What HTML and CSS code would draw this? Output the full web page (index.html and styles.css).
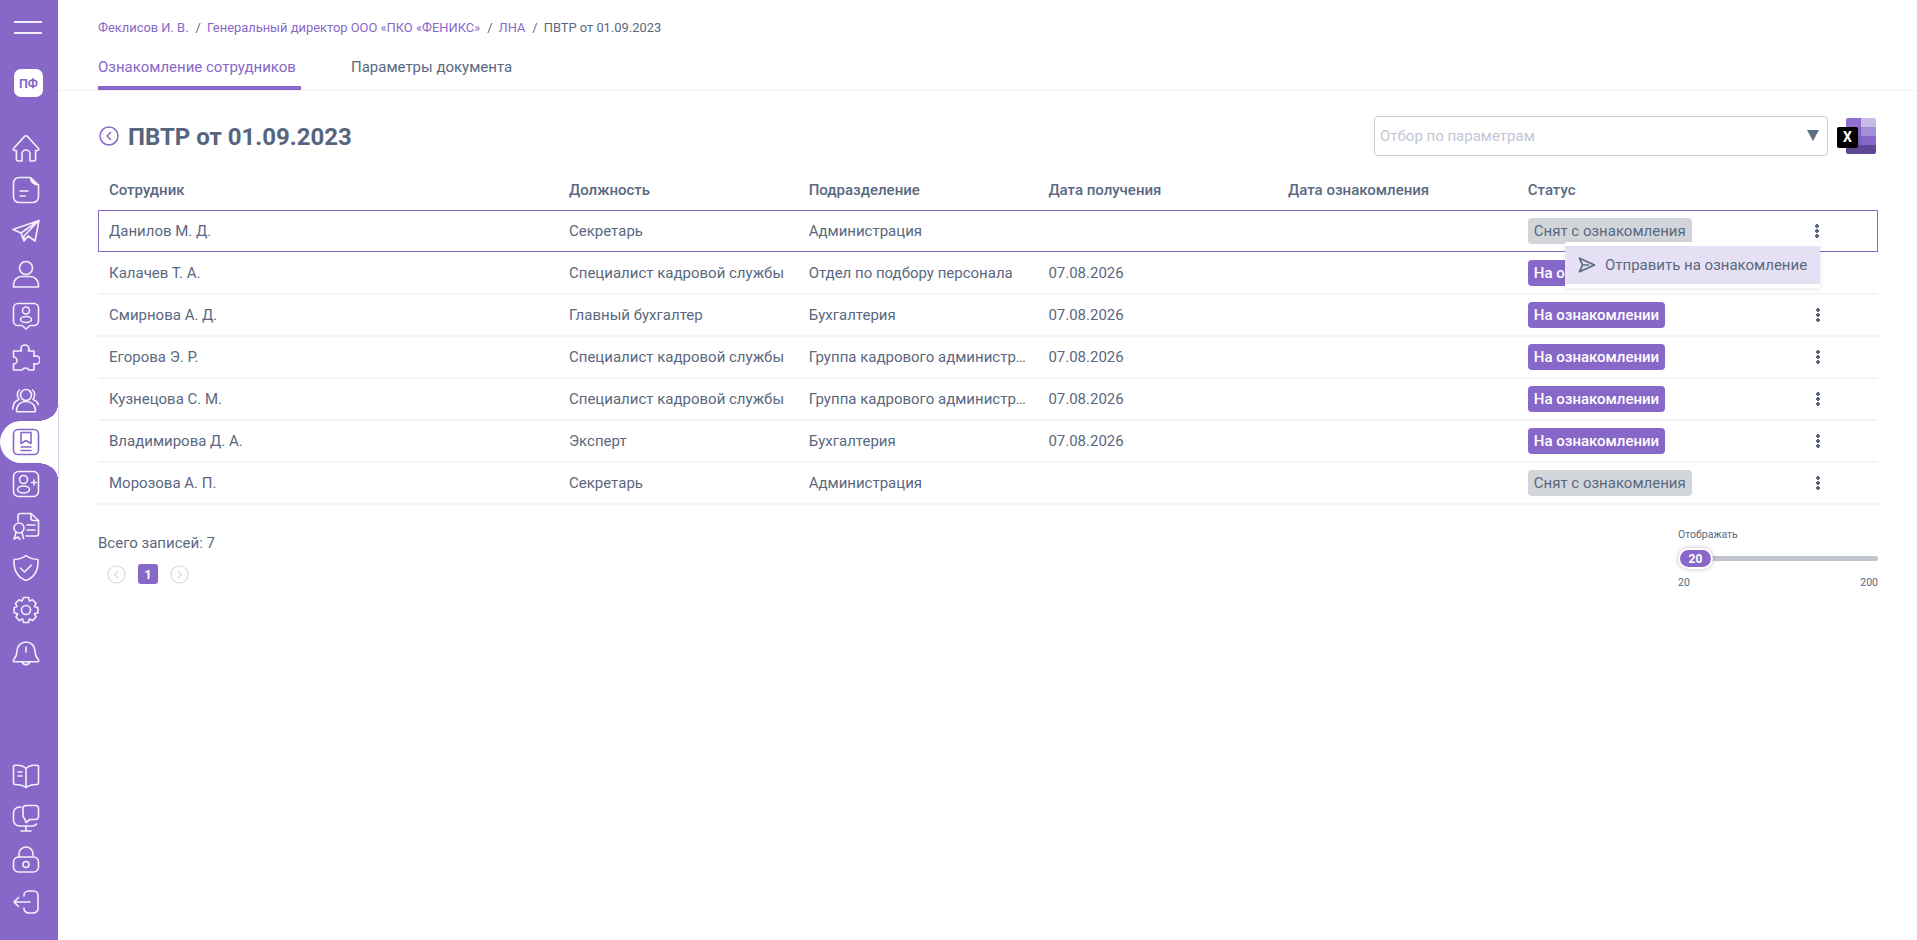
FILE: index.html
```html
<!DOCTYPE html>
<html lang="ru">
<head>
<meta charset="utf-8">
<title>ПВТР от 01.09.2023</title>
<link rel="stylesheet" href="styles.css">
</head>
<body>
<div class="app">
  <aside class="sidebar">
    <div class="burger"><span></span><span></span></div>
    <div class="logo">ПФ</div>
    <nav class="nav">
      <a class="nav-item"><svg viewBox="0 0 28 28"><path d="M1.500 14.500 12.600 2.400a1.900 1.900 0 0 1 2.800 0l11.100 12.100c.7.900 0 2-1 2h-1.900v8.500a2 2 0 0 1-2 2H18v-7a4 4 0 0 0-8 0v7H6.400a2 2 0 0 1-2-2v-8.500H2.500c-1 0-1.700-1.100-1-2Z"/></svg></a>
      <a class="nav-item"><svg viewBox="0 0 28 28"><path d="M18 1.500H7a5.500 5.500 0 0 0-5.500 5.500v14A5.500 5.500 0 0 0 7 26.500h14a5.500 5.500 0 0 0 5.500-5.500V9"/><path d="M18.500 1.500c.2 4 2.500 7 8 7.500Z" fill="#fff"/><path d="M8 15h8M8 20h5"/></svg></a>
      <a class="nav-item"><svg viewBox="0 0 28 28"><path d="M27 2.500 1 11.500l8 3.500 3 8 4-5 7 5L27 2.500ZM27 2.500 9 15M27 2.500 12 18v5"/></svg></a>
      <a class="nav-item"><svg viewBox="0 0 28 28"><circle cx="14" cy="8" r="6.500"/><path d="M1.500 27v-2c0-5 4-8.500 8-8.500h9c4 0 8 3.500 8 8.500v2Z"/></svg></a>
      <a class="nav-item"><svg viewBox="0 0 28 28"><path d="M6 1.500h16A4.500 4.500 0 0 1 26.500 6v13a4.500 4.500 0 0 1-4.500 4.500h-4L14 27l-4-3.500H6A4.500 4.500 0 0 1 1.500 19V6A4.500 4.500 0 0 1 6 1.500Z"/><circle cx="14" cy="8.500" r="3.500"/><ellipse cx="14" cy="17.500" rx="5.500" ry="3"/></svg></a>
      <a class="nav-item"><svg viewBox="0 0 28 28"><path d="M1.500 7h8a2.800 2.800 0 0 1-.5-2 4 4 0 0 1 8 0c0 .8-.2 1.500-.5 2H22v5.500a3 3 0 0 1 2-.5 4 4 0 0 1 0 8 3 3 0 0 1-2-.5v6.500h-5a4 4 0 0 0-7 0H1.500V20a3.500 3.500 0 0 0 0-7Z"/></svg></a>
      <a class="nav-item"><svg viewBox="0 0 28 28"><circle cx="14" cy="9" r="5.500"/><path d="M4.500 25c0-6 4-9.500 9.500-9.500s9.500 3.500 9.500 9.500c0 .5-.3.800-.8.800H5.300c-.5 0-.8-.3-.8-.8Z"/><path d="M7.500 4C5 6 4.500 10.500 7 13.500 3 15 .8 18.500 .8 23M20.500 4c2.500 2 3 6.500.5 9.500 4 1.500 6.200 5 6.200 9.500"/></svg></a>
      <a class="nav-item active"><svg viewBox="0 0 28 28"><rect x="1.500" y="1.500" width="25" height="25" rx="4.500"/><path d="M9 4.500h10v11l-5-3-5 3Z"/><path d="M9 19h10M9 22.500h10"/></svg><span class="active-edge"></span></a>
      <a class="nav-item"><svg viewBox="0 0 28 28"><rect x="1.500" y="1.500" width="25" height="25" rx="5"/><circle cx="11.500" cy="9.500" r="4"/><ellipse cx="11.500" cy="19.500" rx="6" ry="3.500"/><path d="M19.500 12.500h5M22 10v5"/></svg></a>
      <a class="nav-item"><svg viewBox="0 0 28 28"><path d="M6 9V4a2.500 2.500 0 0 1 2.500-2.500H19l7.500 7V22a2 2 0 0 1-2 2H14"/><path d="M19 1.500V6a2.500 2.500 0 0 0 2.500 2.500h5M15 13h8M15 18h8"/><circle cx="7" cy="16" r="5"/><path d="M4 20.500 2 27l4-2 2 2.500M10 20.500l1.500 6"/></svg></a>
      <a class="nav-item"><svg viewBox="0 0 28 28"><path d="M14 1.500c3 2.500 8 3.800 12 4 .5 10-2.500 17.500-12 21-9.500-3.500-12.500-11-12-21 4-.2 9-1.500 12-4Z"/><path d="m8.500 14 4 4 7-7"/></svg></a>
      <a class="nav-item"><svg viewBox="0 0 28 28"><circle cx="14" cy="14" r="4.500"/><path d="M11.500 1.500h5l1 3.500 3-1.200 3.600 3.600-1.700 3 3.500 1.400v5l-3.500 1 1.700 3.200-3.600 3.600-3-1.700-1 3.600h-5l-1-3.600-3 1.700-3.600-3.600 1.700-3.200-3.500-1v-5L5.100 10.400l-1.700-3L7 3.800 10 5Z"/></svg></a>
      <a class="nav-item"><svg viewBox="0 0 28 28"><path d="M5 13a9 9 0 0 1 18 0c0 5 1.500 6.500 3.500 9 .6.800 0 1.800-1 1.800h-23c-1 0-1.600-1-1-1.800C3.500 19.500 5 18 5 13Z"/><path d="M14 9v5M10.500 24c0 3.500 7 3.500 7 0"/></svg></a>
    </nav>
    <nav class="nav nav-bottom">
      <a class="nav-item"><svg viewBox="0 0 28 28"><path d="M14 6.500C11 3.500 5.500 3 2 3.500a.8.800 0 0 0-.5.700V21c0 1 .5 1.500 1.500 1.500 4 0 7.500.5 11 3 3.500-2.500 7-3 11-3 1 0 1.500-.5 1.500-1.500V4.200a.8.800 0 0 0-.5-.7C22.500 3 17 3.500 14 6.500ZM14 6.500v19"/><path d="M6 10h4M6 14h4"/></svg></a>
      <a class="nav-item"><svg viewBox="0 0 28 28"><path d="M9 3H7.500a6 6 0 0 0-6 6v7a6 6 0 0 0 6 6h13a5 5 0 0 0 4-2M14 22v5M9 27h10"/><path d="M14 1.500h9.500a3 3 0 0 1 3 3v8a3 3 0 0 1-3 3H18l-4 3-1.500-4a3 3 0 0 1-1.500-2.500V4.500a3 3 0 0 1 3-3Z"/></svg></a>
      <a class="nav-item"><svg viewBox="0 0 28 28"><path d="M7 11V8a7 7 0 0 1 14 0v1.500"/><rect x="1.500" y="11" width="25" height="15" rx="5"/><circle cx="14" cy="18.500" r="3"/></svg></a>
      <a class="nav-item"><svg viewBox="0 0 28 28"><path d="M12 8v-.5A4.500 4.500 0 0 1 16.500 3h5A4.500 4.500 0 0 1 26 7.500v13a4.500 4.500 0 0 1-4.500 4.500h-5a4.500 4.500 0 0 1-4.500-4.500V20M18 14H2M6.500 9.500 2 14l4.500 4.500"/></svg></a>
    </nav>
  </aside>

  <main class="main">
    <header class="top">
      <div class="crumbs">
        <a>Феклисов И. В.</a><i>/</i><a>Генеральный директор ООО «ПКО «ФЕНИКС»</a><i>/</i><a>ЛНА</a><i>/</i><span>ПВТР от 01.09.2023</span>
      </div>
      <div class="tabs">
        <a class="tab tab-on">Ознакомление сотрудников</a>
        <a class="tab">Параметры документа</a>
      </div>
    </header>

    <section class="content">
      <div class="title-row">
        <svg class="back" viewBox="0 0 20 20"><circle cx="10" cy="10" r="9"/><path d="M11.500 6.500 8 10l3.500 3.500"/></svg>
        <h1 class="title">ПВТР от 01.09.2023</h1>
        <div class="filter">
          <span class="filter-text">Отбор по параметрам</span>
          <span class="filter-arrow"></span>
        </div>
        <div class="excel">
          <div class="xl-grid"><b class="c1"></b><b class="c2"></b><b class="c3"></b><b class="c4"></b><b class="c5"></b><b class="c6"></b><b class="c7"></b><b class="c7"></b></div>
          <div class="xl-x">X</div>
        </div>
      </div>

      <div class="table">
        <div class="row head"><div>Сотрудник</div><div>Должность</div><div>Подразделение</div><div>Дата получения</div><div>Дата ознакомления</div><div>Статус</div><div></div></div>

        <div class="row selected"><div>Данилов М. Д.</div><div>Секретарь</div><div>Администрация</div><div></div><div></div><div><span class="badge off">Снят с ознакомления</span></div><div class="more"><span class="kebab"></span></div>
          <div class="menu"><div class="menu-item"><svg viewBox="0 0 18 16"><path d="M1.500 1.200 16.500 8 1.500 14.800 4.500 8ZM4.500 8h6"/></svg><span>Отправить на ознакомление</span></div></div>
        </div>
        <div class="row"><div>Калачев Т. А.</div><div>Специалист кадровой службы</div><div class="cut">Отдел по подбору персонала</div><div>07.08.2026</div><div></div><div><span class="badge on">На ознакомлении</span></div><div class="more"><span class="kebab"></span></div></div>
        <div class="row"><div>Смирнова А. Д.</div><div>Главный бухгалтер</div><div class="cut">Бухгалтерия</div><div>07.08.2026</div><div></div><div><span class="badge on">На ознакомлении</span></div><div class="more"><span class="kebab"></span></div></div>
        <div class="row"><div>Егорова Э. Р.</div><div>Специалист кадровой службы</div><div class="cut">Группа кадрового администрирования</div><div>07.08.2026</div><div></div><div><span class="badge on">На ознакомлении</span></div><div class="more"><span class="kebab"></span></div></div>
        <div class="row"><div>Кузнецова С. М.</div><div>Специалист кадровой службы</div><div class="cut">Группа кадрового администрирования</div><div>07.08.2026</div><div></div><div><span class="badge on">На ознакомлении</span></div><div class="more"><span class="kebab"></span></div></div>
        <div class="row"><div>Владимирова Д. А.</div><div>Эксперт</div><div class="cut">Бухгалтерия</div><div>07.08.2026</div><div></div><div><span class="badge on">На ознакомлении</span></div><div class="more"><span class="kebab"></span></div></div>
        <div class="row"><div>Морозова А. П.</div><div>Секретарь</div><div class="cut">Администрация</div><div></div><div></div><div><span class="badge off">Снят с ознакомления</span></div><div class="more"><span class="kebab"></span></div></div>
      </div>

      <div class="foot">
        <div class="foot-left">
          <div class="total">Всего записей: 7</div>
          <div class="pager">
            <svg class="pg" viewBox="0 0 20 20"><circle cx="10" cy="10" r="9"/><path d="M11.500 6.500 8 10l3.500 3.500"/></svg>
            <span class="page-num">1</span>
            <svg class="pg" viewBox="0 0 20 20"><circle cx="10" cy="10" r="9"/><path d="M8.500 6.500 12 10l-3.500 3.500"/></svg>
          </div>
        </div>
        <div class="slider">
          <div class="slider-label">Отображать</div>
          <div class="slider-track"><span class="slider-thumb">20</span></div>
          <div class="slider-scale"><span>20</span><span>200</span></div>
        </div>
      </div>
    </section>
  </main>
</div>
</body>
</html>
```
FILE: styles.css
```css
* { box-sizing: border-box; }
html, body { margin: 0; height: 100%; }
body { font-family: Roboto, "Liberation Sans", sans-serif; color: #5a6880; background: #fff; overflow: hidden; }
.app { display: flex; height: 940px; }

.sidebar { width: 58px; flex: none; background: #8767c8; display: flex; flex-direction: column; align-items: stretch; padding-top: 21px; padding-bottom: 17px; }
.burger { height: 13px; margin: 0 16px 0 14px; display: flex; flex-direction: column; justify-content: space-between; }
.burger span { display: block; height: 2px; background: #f3effa; }
.logo { width: 29px; height: 28px; margin: 35px 0 0 14px; border-radius: 7px; background: #fff; color: #8767c8; font-size: 12.500px; font-weight: 700; display: flex; align-items: center; justify-content: center; }
.nav { display: flex; flex-direction: column; margin-top: 30px; }
.nav-bottom { margin-top: auto; }
.nav-item { height: 42px; display: flex; align-items: center; justify-content: center; padding-right: 6px; position: relative; }
.nav-item svg { width: 28px; height: 28px; fill: none; stroke: #f4f0fb; stroke-width: 1.600; stroke-linecap: round; stroke-linejoin: round; position: relative; }
.nav-item.active { background: #fff; border-radius: 22px 0 0 22px; }
.nav-item.active svg { stroke: #8767c8; }
.nav-item.active::before, .nav-item.active::after { content: ""; position: absolute; right: 0; width: 20px; height: 16px; }
.nav-item.active::before { bottom: 100%; background: radial-gradient(ellipse 20px 16px at 0 0, #8767c8 98%, #fff 100%); }
.nav-item.active::after { top: 100%; background: radial-gradient(ellipse 20px 16px at 0 100%, #8767c8 98%, #fff 100%); }
.active-edge { position: absolute; left: 100%; top: -16px; bottom: -16px; width: 1px; background: #dcd5ee; }

.main { flex: 1; min-width: 0; display: flex; flex-direction: column; }
.top { height: 91px; padding: 0 39px 0 40px; border-bottom: 1px solid #f0f0f6; }
.crumbs { padding-top: 20px; height: 48px; font-size: 12.900px; line-height: 15px; color: #5a6880; }
.crumbs a { color: #8767c8; }
.crumbs i { font-style: normal; margin: 0 6px 0 7px; }
.tabs { display: flex; gap: 50px; height: 42px; }
.tab { font-size: 15px; line-height: 18px; padding-top: 10px; height: 42px; }
.tab-on { color: #8767c8; border-bottom: 4px solid #8767c8; padding-right: 5px; }

.content { padding: 0 39px 0 40px; }
.title-row { display: flex; align-items: center; height: 86px; padding-top: 3px; }
.back { width: 20px; height: 20px; margin-left: 1px; fill: none; stroke: #8767c8; stroke-width: 1.500; stroke-linecap: round; stroke-linejoin: round; }
.title { margin: 2px 0 0 9px; font-size: 24px; font-weight: 700; color: #56657d; line-height: 28px; }
.filter { margin-left: auto; width: 454px; height: 40px; border: 1px solid #c6cad2; border-radius: 4px; display: flex; align-items: center; justify-content: space-between; padding: 0 8px 0 5px; }
.filter-text { font-size: 15px; color: #c2c6d4; }
.filter-arrow { width: 0; height: 0; border-left: 6.500px solid transparent; border-right: 6.500px solid transparent; border-top: 11px solid #5f6f84; }
.excel { position: relative; width: 40px; height: 36px; margin-left: 9px; margin-right: 1px; }
.xl-grid { position: absolute; left: 9px; top: 0; width: 30px; height: 36px; display: grid; grid-template-columns: 1fr 1fr; grid-template-rows: repeat(4, 1fr); border-radius: 2px; overflow: hidden; }
.c1 { background: #8e6fcc; } .c2 { background: #c9bbe7; } .c3 { background: #8065c2; } .c4 { background: #a38fd8; } .c5 { background: #7a5fbb; } .c6 { background: #8767c8; } .c7 { background: #5e4893; }
.xl-x { position: absolute; left: 0; top: 9px; width: 21px; height: 21px; background: #000; color: #fff; border-radius: 2px; font-size: 14px; font-weight: 700; display: flex; align-items: center; justify-content: center; }

.table { display: flex; flex-direction: column; }
.row { display: grid; grid-template-columns: 460px repeat(4, 239.700px) 1fr 71px; height: 42px; align-items: center; padding-left: 11px; font-size: 15px; border-bottom: 2px solid #f3f3f8; position: relative; }
.row > div { white-space: nowrap; }
.head { height: 37px; border: 0; font-weight: 500; padding-bottom: 3px; margin-top: -4px; }
.selected { margin-bottom: 1px; border: 1px solid #8767c8; padding-left: 10px; }
.cut { overflow: hidden; text-overflow: ellipsis; padding-right: 18px; }
.badge { display: inline-block; height: 26px; line-height: 26px; border-radius: 4px; padding: 0 6px; }
.badge.on { background: #8767c8; color: #fff; font-weight: 500; }
.badge.off { background: #d2d6da; color: #5a6880; }
.more { display: flex; justify-content: flex-start; padding-left: 8.500px; }
.kebab { width: 4px; height: 14px; display: block; background: radial-gradient(circle at 2px 2px, #5a6880 1.700px, transparent 2.100px) 0 0 / 4px 5px repeat-y; }
.menu { position: absolute; left: 1466px; top: 31px; width: 255px; padding: 4px 0; background: #fff; box-shadow: 0 1px 5px rgba(60, 50, 100, .12); z-index: 2; white-space: nowrap; }
.menu-item { height: 38px; background: #e6e0f4; display: flex; align-items: center; padding-left: 13px; gap: 9px; font-size: 15px; }
.menu-item svg { width: 18px; height: 16px; fill: none; stroke: #5a6880; stroke-width: 1.700; stroke-linejoin: round; stroke-linecap: round; }

.foot { display: flex; justify-content: space-between; padding-top: 29px; }
.total { font-size: 15px; line-height: 18px; }
.pager { display: flex; align-items: center; gap: 12px; margin: 12px 0 0 9px; }
.pg { width: 19px; height: 19px; fill: none; stroke: #d5d9de; stroke-width: 1.200; stroke-linecap: round; stroke-linejoin: round; }
.page-num { width: 20px; height: 20px; background: #8767c8; color: #fff; border-radius: 3px; font-size: 13px; font-weight: 700; display: flex; align-items: center; justify-content: center; }
.slider { width: 200px; margin-top: -5px; }
.slider-label { font-size: 10.500px; line-height: 12px; }
.slider-track { height: 5px; background: #c0c4cc; border-radius: 3px; margin-top: 15px; position: relative; }
.slider-thumb { position: absolute; left: 0; top: -8px; width: 35px; height: 21px; background: #8767c8; border: 2px solid #fff; box-shadow: 0 0 4px rgba(60, 50, 100, .35); border-radius: 11px; color: #fff; font-size: 12px; font-weight: 700; display: flex; align-items: center; justify-content: center; }
.slider-scale { display: flex; justify-content: space-between; font-size: 10.500px; line-height: 12px; margin-top: 16px; }
```
